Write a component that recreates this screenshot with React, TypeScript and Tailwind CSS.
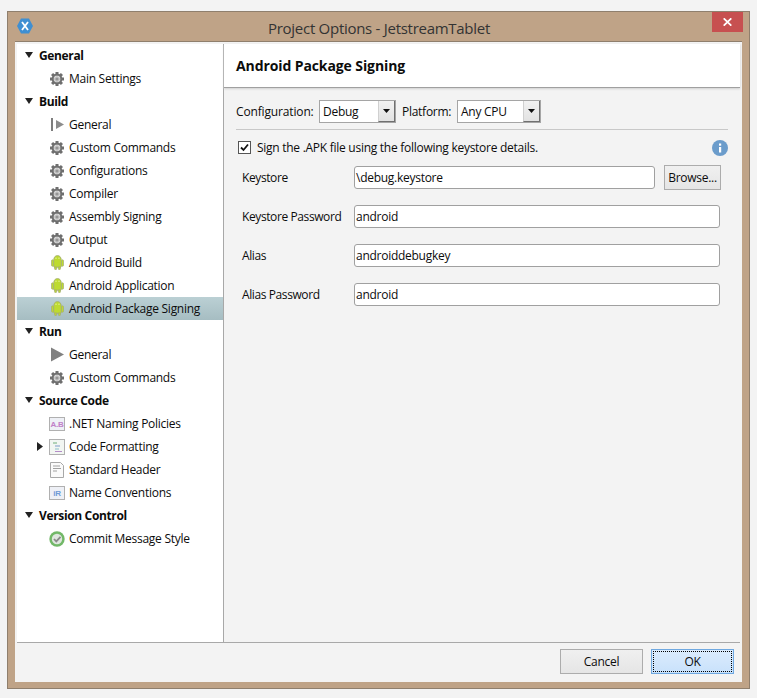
import React from "react";

const Gear = () => (
  <svg width="14" height="14" viewBox="0 0 14 14">
    <g fill="#6f6f6f">
      {[0, 45, 90, 135, 180, 225, 270, 315].map((a) => (
        <rect key={a} x="5.5" y="0" width="3" height="3.5" transform={`rotate(${a} 7 7)`} />
      ))}
    </g>
    <circle cx="7" cy="7" r="4.4" fill="none" stroke="#6f6f6f" strokeWidth="2" />
    <circle cx="7" cy="7" r="3.1" fill="#c8c8c8" />
    <circle cx="7" cy="7" r="1.6" fill="#969696" />
  </svg>
);

const Android = () => (
  <svg width="13" height="15" viewBox="0 0 13 15">
    <path d="M2.7 5.2C2.7 2.4 4.2.6 6.5.6s3.8 1.8 3.8 4.6v6.2c0 .5-.4.9-.9.9H3.6c-.5 0-.9-.4-.9-.9z" fill="#bedb2f" stroke="#a3ab78" strokeWidth=".8" />
    <path d="M3.6 12h2v1.9c0 .3-.2.6-.6.6h-.8c-.4 0-.6-.3-.6-.6zM7.4 12h2v1.9c0 .3-.2.6-.6.6H8c-.4 0-.6-.3-.6-.6z" fill="#bedb2f" stroke="#a3ab78" strokeWidth=".7" />
    <rect x=".5" y="4.8" width="2" height="6.4" rx="1" fill="#bedb2f" stroke="#a3ab78" strokeWidth=".7" />
    <rect x="10.5" y="4.8" width="2" height="6.4" rx="1" fill="#bedb2f" stroke="#a3ab78" strokeWidth=".7" />
    <circle cx="5" cy="3.2" r=".6" fill="#f0f7c0" />
    <circle cx="8" cy="3.2" r=".6" fill="#f0f7c0" />
  </svg>
);

const BarPlay = () => (
  <svg width="14" height="15" viewBox="0 0 14 15">
    <rect x="1" y="1" width="2" height="13" fill="#7d7d7d" />
    <path d="M6 3 L14 7.5 L6 12 Z" fill="#8c8c8c" />
  </svg>
);

const Play = () => (
  <svg width="14" height="15" viewBox="0 0 14 15">
    <path d="M1 0.5 L14 7.5 L1 14.5 Z" fill="#808080" />
  </svg>
);

const Box = ({ label, color }: { label: string; color: string }) => (
  <svg width="16" height="14" viewBox="0 0 16 14">
    <rect x=".5" y=".5" width="15" height="13" fill="#eef0f6" stroke="#b0b0b0" />
    <text x="8" y="10" textAnchor="middle" fontSize="8" fontWeight="700" fill={color} fontFamily="Liberation Sans, sans-serif">{label}</text>
  </svg>
);

const CodeFmt = () => (
  <svg width="16" height="16" viewBox="0 0 16 16">
    <rect x=".5" y=".5" width="15" height="15" fill="#f2f6f2" stroke="#b0b0b0" />
    <path d="M4 4h4" stroke="#6fae7a" />
    <path d="M6 7h5" stroke="#7d9ac8" />
    <path d="M6 10h4" stroke="#8cc0c8" />
    <path d="M6 12.5h7" stroke="#b48cc8" />
  </svg>
);

const Doc = () => (
  <svg width="14" height="16" viewBox="0 0 14 16">
    <path d="M.5.5h10l3 3v12H.5z" fill="#fafafa" stroke="#a8a8a8" />
    <path d="M3 4h7M3 6.5h8M3 9h4" stroke="#a0a0a0" />
  </svg>
);

const Check = () => (
  <svg width="16" height="16" viewBox="0 0 16 16">
    <circle cx="8" cy="8" r="7.7" fill="#72b868" />
    <circle cx="8" cy="8" r="5.2" fill="#dfe6df" />
    <path d="M5 8l2.3 2.4L11.5 5.8" fill="none" stroke="#8a8a8a" strokeWidth="1.8" />
  </svg>
);

const Head = ({ t }: { t: string }) => (
  <div className="flex h-[23px] items-center pl-2">
    <svg width="8" height="6" viewBox="0 0 8 6" className="mt-[-2px]">
      <path d="M0 0h8L4 6z" fill="#222" />
    </svg>
    <span className="ml-[6px] font-bold tracking-[-0.35px]">{t}</span>
  </div>
);

const Item = ({ t, icon, sel, arrow }: { t: string; icon: React.ReactNode; sel?: boolean; arrow?: boolean }) => (
  <div className={`flex h-[23px] items-center pl-[20px] ${sel ? "bg-gradient-to-b from-[#bbd0d4] to-[#a6bdc2]" : ""}`}>
    <div className="flex w-[12px] items-center">
      {arrow && (
        <svg width="6" height="9" viewBox="0 0 6 9">
          <path d="M0 0l6 4.5L0 9z" fill="#222" />
        </svg>
      )}
    </div>
    <div className="mr-[4px] flex w-[16px] justify-center">{icon}</div>
    <span>{t}</span>
  </div>
);

const Select = ({ t, w }: { t: string; w: string }) => (
  <div className={`flex h-[23px] items-stretch border border-[#a5a5a5] bg-white ${w}`}>
    <span className="flex-1 pl-[3px] leading-[21px]">{t}</span>
    <div className="flex w-[17px] items-center justify-center border-b border-l border-r border-b-[#707070] border-l-[#d0d0d0] border-r-[#707070] bg-gradient-to-b from-[#f2f2f2] to-[#e2e2e2]">
      <svg width="7" height="4" viewBox="0 0 7 4">
        <path d="M0 0h7L3.5 4z" fill="#111" />
      </svg>
    </div>
  </div>
);

const Field = ({ label, value, children }: { label: string; value: string; children?: React.ReactNode }) => (
  <div className="flex h-[23px] items-center pl-[6px]">
    <span className="w-[112px] tracking-[-0.4px]">{label}</span>
    <div className={`h-[23px] rounded-[3px] border border-[#a0a0a0] bg-white pl-[1px] leading-[21px] ${children ? "w-[301px]" : "w-[366px]"}`}>{value}</div>
    {children}
  </div>
);

export default function App() {
  return (
    <div className="h-[698px] w-[757px] bg-[#f3f3f3] pl-[7px] pt-[11px] text-[12px] tracking-[-0.27px] text-[#0c0c0c]" style={{ fontFamily: '"Open Sans", "Noto Sans", sans-serif' }}>
      <div className="flex h-[678px] w-[743px] flex-col border border-[#8f7f6d] bg-[#bfa387] px-[7px] pb-[6px]">
        <div className="flex h-[29px] shrink-0 items-start">
          <svg width="16" height="16" viewBox="0 0 16 16" className="ml-[2px] mt-[6px] shrink-0">
            <path d="M4 .5h8L16 8l-4 7.5H4L0 8z" fill="#3f8fd2" />
            <path d="M5 4l6 8M11 4l-6 8" stroke="#fff" strokeWidth="1.8" />
          </svg>
          <div className="mt-[6px] flex-1 pl-[13px] text-center text-[15px] leading-[20px] tracking-[-0.28px] text-[#333]">Project Options - JetstreamTablet</div>
          <div className="mr-[-1px] flex h-[20px] w-[31px] shrink-0 items-center justify-center bg-[#c75050]">
            <svg width="9" height="8" viewBox="0 0 9 8">
              <path d="M.7.3l7.6 7.4M8.3.3L.7 7.7" stroke="#fff" strokeWidth="1.7" />
            </svg>
          </div>
        </div>
        <div className="flex min-h-0 flex-1 flex-col border-t border-[#8f7f6d] bg-[#f3f3f3] pl-[2px] pr-[2px] pt-[2px]">
          <div className="flex min-h-0 flex-1">
            <div className="w-[207px] shrink-0 border-r border-[#a8a8a8] bg-white">
              <Head t="General" />
              <Item t="Main Settings" icon={<Gear />} />
              <Head t="Build" />
              <Item t="General" icon={<BarPlay />} />
              <Item t="Custom Commands" icon={<Gear />} />
              <Item t="Configurations" icon={<Gear />} />
              <Item t="Compiler" icon={<Gear />} />
              <Item t="Assembly Signing" icon={<Gear />} />
              <Item t="Output" icon={<Gear />} />
              <Item t="Android Build" icon={<Android />} />
              <Item t="Android Application" icon={<Android />} />
              <Item t="Android Package Signing" icon={<Android />} sel />
              <Head t="Run" />
              <Item t="General" icon={<Play />} />
              <Item t="Custom Commands" icon={<Gear />} />
              <Head t="Source Code" />
              <Item t=".NET Naming Policies" icon={<Box label="A.B" color="#c07fc8" />} />
              <Item t="Code Formatting" icon={<CodeFmt />} arrow />
              <Item t="Standard Header" icon={<Doc />} />
              <Item t="Name Conventions" icon={<Box label="iR" color="#6f9ad6" />} />
              <Head t="Version Control" />
              <Item t="Commit Message Style" icon={<Check />} />
            </div>
            <div className="flex min-w-0 flex-1 flex-col">
              <div className="flex h-[44px] shrink-0 items-center border-b border-[#a0a0a0] bg-white pl-[12px] text-[14px] font-bold tracking-[-0.1px] shadow-[0_1px_2px_#d0d0d0]">
                Android Package Signing
              </div>
              <div className="pl-[12px] pr-[12px] pt-[12px]">
                <div className="flex items-center">
                  <span className="w-[83px] tracking-[-0.15px]">Configuration:</span>
                  <Select t="Debug" w="w-[77px]" />
                  <span className="ml-[6px] w-[55px]">Platform:</span>
                  <Select t="Any CPU" w="w-[84px]" />
                </div>
                <div className="mt-[6px] h-px bg-[#c8c8c8]" />
                <div className="mt-[9px] flex h-[17px] items-center pl-[2px]">
                  <div className="flex h-[13px] w-[13px] items-center justify-center border border-[#555] bg-white">
                    <svg width="9" height="9" viewBox="0 0 9 9">
                      <path d="M1 4.5l2.5 2.5L8 1.5" fill="none" stroke="#111" strokeWidth="1.8" />
                    </svg>
                  </div>
                  <span className="ml-[6px] flex-1">Sign the .APK file using the following keystore details.</span>
                  <svg width="16" height="16" viewBox="0 0 16 16">
                    <circle cx="8" cy="8" r="8" fill="#6b9ccb" />
                    <rect x="7" y="7" width="2.2" height="5.5" fill="#fff" />
                    <rect x="7" y="3.5" width="2.2" height="2.2" fill="#fff" />
                  </svg>
                </div>
                <div className="mt-[10px] flex flex-col gap-[16px]">
                  <Field label="Keystore" value="\debug.keystore">
                    <button className="ml-[9px] h-[25px] w-[57px] border border-[#acacac] bg-gradient-to-b from-[#f0f0f0] to-[#e5e5e5] text-[12px]">Browse...</button>
                  </Field>
                  <Field label="Keystore Password" value="android" />
                  <Field label="Alias" value="androiddebugkey" />
                  <Field label="Alias Password" value="android" />
                </div>
              </div>
            </div>
          </div>
          <div className="flex h-[40px] shrink-0 items-start justify-end border-t border-[#a8a8a8] pr-[6px] pt-[6px]">
            <button className="h-[25px] w-[83px] border border-[#acacac] bg-gradient-to-b from-[#f0f0f0] to-[#e5e5e5] text-[12px]">Cancel</button>
            <button className="ml-[8px] h-[25px] w-[83px] border border-[#6fa8e0] bg-gradient-to-b from-[#dcecfd] to-[#c8e1fb] p-px text-[12px]">
              <div className="h-full w-full border border-dotted border-black leading-[19px]">OK</div>
            </button>
          </div>
        </div>
      </div>
    </div>
  );
}
